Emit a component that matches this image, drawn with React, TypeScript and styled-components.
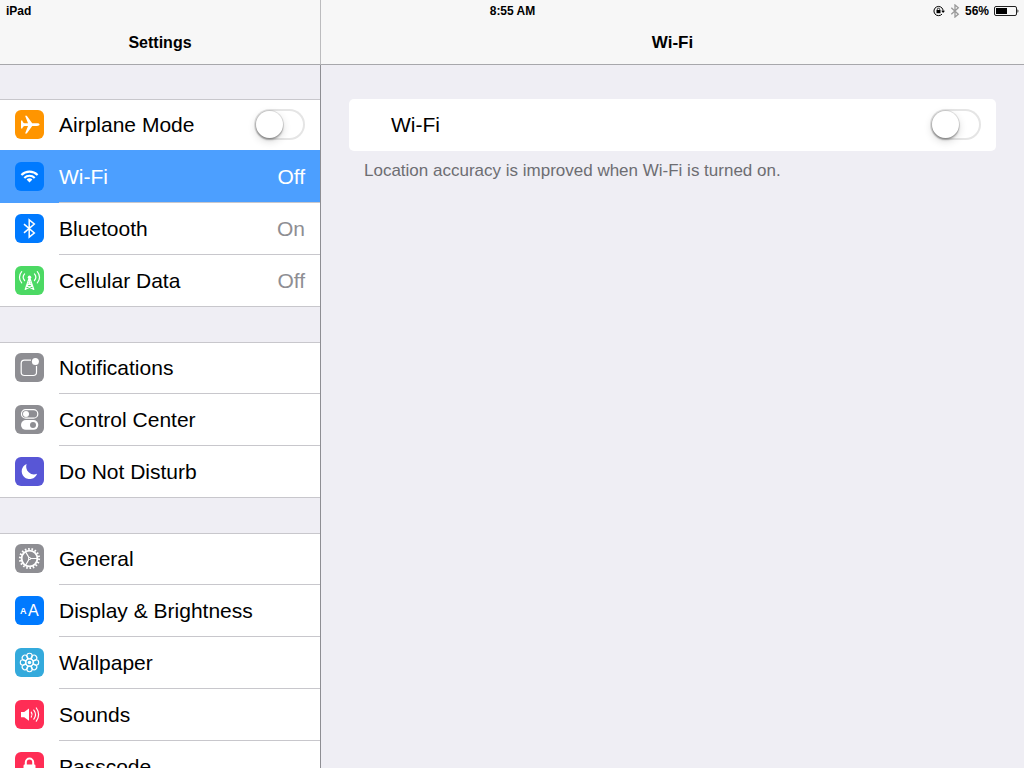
import React, { useState } from "react";
import styled, { createGlobalStyle, css } from "styled-components";

const GlobalStyle = createGlobalStyle`
  *, *::before, *::after { box-sizing: border-box; }
  body {
    margin: 0;
    background: #efeef4;
    color: #000;
    font-family: "Liberation Sans", Arial, sans-serif;
  }
  button, input { font: inherit; color: inherit; }
`;

const hairline = "#c8c7cc";

const Screen = styled.div`
  position: relative;
  display: flex;
  height: 100vh;
  overflow: hidden;
`;

const StatusBar = styled.div`
  position: absolute;
  inset: 0 0 auto 0;
  display: grid;
  grid-template-columns: 1fr auto 1fr;
  align-items: center;
  height: 21px;
  padding: 0 5px 0 6px;
  font-size: 12px;
  line-height: 20px;
  font-weight: 700;
`;

const StatusIcons = styled.div`
  display: flex;
  justify-content: flex-end;
  align-items: center;
  gap: 5px;
`;

const Sidebar = styled.aside`
  display: flex;
  flex-direction: column;
  flex: 0 0 321px;
  min-height: 0;
`;

const Detail = styled.main`
  display: flex;
  flex-direction: column;
  flex: 1;
  min-width: 0;
`;

const TitleBar = styled.header<{ $divided?: boolean }>`
  flex: none;
  height: 65px;
  padding-top: 33px;
  background: #f7f7f7;
  border-bottom: 1px solid #a7a7ab;
  border-right: ${(p) => (p.$divided ? "1px solid #bcbcbe" : "0")};
`;

const Title = styled.h1<{ $size: number }>`
  margin: 0;
  font-size: ${(p) => p.$size}px;
  line-height: 20px;
  font-weight: 700;
  text-align: center;
`;

const Menu = styled.nav`
  flex: 1;
  min-height: 0;
  display: flex;
  flex-direction: column;
  gap: 35px;
  padding-top: 34px;
  border-right: 1px solid #8e8e93;
  overflow-y: auto;
  scrollbar-width: none;
`;

const Group = styled.ul`
  list-style: none;
  margin: 0;
  padding: 0;
  flex: none;
`;

const RowBody = styled.span`
  display: flex;
  align-items: center;
  flex: 1;
  height: 52px;
  padding-right: 15px;
  border-bottom: 1px solid ${hairline};
`;

const rowStyle = css<{ $selected?: boolean }>`
  position: ${(p) => (p.$selected ? "relative" : "static")};
  display: flex;
  gap: 15px;
  width: 100%;
  height: 52px;
  margin: 0;
  padding: 0 0 0 15px;
  border: 0;
  background: ${(p) => (p.$selected ? "#4c9fff" : "#fff")};
  box-shadow: ${(p) => (p.$selected ? "0 -1px 0 #4c9fff" : "none")};
  color: ${(p) => (p.$selected ? "#fff" : "#000")};
  font-size: 21px;
  line-height: 26px;
  text-align: left;
`;

const RowButton = styled.button<{ $selected?: boolean }>`
  ${rowStyle}
  cursor: pointer;
`;

const RowLabel = styled.label<{ $selected?: boolean }>`
  ${rowStyle}
`;

const Item = styled.li`
  &:first-child > * {
    box-shadow: inset 0 1px 0 ${hairline};
  }
  &:last-child > * {
    border-bottom: 1px solid ${hairline};
  }
  &:last-child ${RowBody} {
    height: 51px;
    border-bottom: 0;
  }
`;

const RowTitle = styled.span`
  flex: 1;
`;

const RowValue = styled.span<{ $selected?: boolean }>`
  color: ${(p) => (p.$selected ? "#fff" : "#8e8e93")};
`;

const IconTile = styled.span<{ $color: string }>`
  flex: none;
  width: 29px;
  height: 29px;
  margin-top: 11px;
  border-radius: 6px;
  background: ${(p) => p.$color};
  svg { display: block; }
`;

const Switch = styled.input.attrs({ type: "checkbox", role: "switch" })`
  appearance: none;
  flex: none;
  width: 51px;
  height: 31px;
  margin: 0;
  padding: 0;
  border-radius: 16px;
  background: #fff;
  box-shadow: inset 0 0 0 2px #e5e5e5;
  cursor: pointer;
  &::before {
    content: "";
    display: block;
    width: 27px;
    height: 27px;
    margin: 2px;
    border-radius: 50%;
    background: #fff;
    box-shadow: 0 0 0 1px rgba(0, 0, 0, 0.1), 0 2px 2px rgba(0, 0, 0, 0.26),
      0 3px 8px rgba(0, 0, 0, 0.16);
  }
  &:checked { background: #4cd964; box-shadow: none; }
  &:checked::before { margin-left: 22px; }
`;

const Panel = styled.section`
  padding: 34px 28px;
`;

const Card = styled.label`
  display: flex;
  align-items: center;
  justify-content: space-between;
  height: 52px;
  padding: 0 15px 1px 42px;
  border-radius: 5px;
  background: #fff;
  font-size: 21px;
  line-height: 26px;
`;

const Note = styled.p`
  margin: 9px 15px 0;
  color: #6d6d72;
  font-size: 17px;
  line-height: 22px;
`;

const Svg = ({ children }: { children: React.ReactNode }) => (
  <svg width="29" height="29" viewBox="0 0 29 29" fill="none" stroke="none" aria-hidden="true">
    {children}
  </svg>
);

const Airplane = () => (
  <Svg>
    <path
      fill="#fff"
      d="M24.600 14.600c0 .9-1.200 1.400-2.600 1.400h-4.800l-5.400 7.400h-1.700l2.900-7.400H9.600c-1.200 0-1.700.9-2.400 2.600H6v-8h1.200c.7 1.700 1.200 2.600 2.400 2.600H13l-2.900-7.400h1.700l5.400 7.400H22c1.400 0 2.600.5 2.600 1.400z"
    />
  </Svg>
);

const Wifi = () => (
  <Svg>
    <g stroke="#fff" strokeWidth="2.1">
      <path d="M6.400 12.900a11.600 11.600 0 0 1 16.200 0" />
      <path d="M9.300 15.900a7.400 7.400 0 0 1 10.400 0" />
    </g>
    <path fill="#fff" d="M14.500 20.500l-2.900-2.900a4.200 4.200 0 0 1 5.800 0z" />
  </Svg>
);

const Bluetooth = () => (
  <Svg>
    <path stroke="#fff" strokeWidth="1.5" d="M9 10.100l10.300 8.900-5.100 4.100V5.900l5.100 4.100L9 18.900" />
  </Svg>
);

const Tower = () => (
  <Svg>
    <g stroke="#fff" strokeWidth="1.2" strokeLinecap="round">
      <path d="M6.700 5.600a8.200 8.200 0 0 0 0 11.200M22.300 5.600a8.200 8.200 0 0 1 0 11.200" />
      <path d="M9.600 7.900a5 5 0 0 0 0 6.600M19.400 7.900a5 5 0 0 1 0 6.600" />
      <path d="M14 12.500l-3.800 11M15 12.500l3.800 11M14.500 12.500v4M13 16.600l4.400 3.200-6.400 3.200M16 16.600l-4.400 3.200 6.400 3.200" />
    </g>
    <circle cx="14.500" cy="11.200" r="1.700" fill="#fff" />
  </Svg>
);

const Notification = () => (
  <Svg>
    <path
      stroke="#fff"
      strokeWidth="1.2"
      d="M16 7.200H9.400a3.200 3.200 0 0 0-3.200 3.200v8.900a3.200 3.200 0 0 0 3.200 3.200h8.900a3.200 3.200 0 0 0 3.200-3.200v-6.300"
    />
    <circle cx="20.400" cy="8.600" r="3.500" fill="#fff" />
  </Svg>
);

const Toggles = () => (
  <Svg>
    <rect x="6.500" y="4.600" width="16.300" height="8.600" rx="4.300" stroke="#fff" strokeWidth="1.200" />
    <circle cx="11" cy="8.900" r="3" fill="#fff" />
    <rect x="6" y="15.100" width="17.300" height="9.700" rx="4.850" fill="#fff" />
    <circle cx="18" cy="19.900" r="3" fill="#8e8e93" />
  </Svg>
);

const Moon = () => (
  <Svg>
    <path fill="#fff" d="M11.600 6.900a7.900 7.900 0 1 0 10.500 9.800A7.900 7.900 0 0 1 11.600 6.900z" />
  </Svg>
);

const Gear = () => (
  <Svg>
    <circle cx="14.500" cy="14.500" r="9.500" stroke="#fff" strokeWidth="2.200" strokeDasharray="1.600 1.716" />
    <circle cx="14.500" cy="14.500" r="7.900" stroke="#fff" strokeWidth="1.900" />
    <circle cx="14.500" cy="14.500" r="1.500" fill="#fff" />
    <path stroke="#fff" strokeWidth="1.200" d="M14.500 14.500H22M14.500 14.500L10.700 8M14.500 14.500L10.700 21" />
    <circle cx="14.500" cy="14.500" r=".6" fill="#8e8e93" />
  </Svg>
);

const Letters = () => (
  <Svg>
    <g fill="#fff" fontFamily="Liberation Sans, Arial, sans-serif">
      <text x="5" y="18" fontSize="9" fontWeight="700">A</text>
      <text x="13" y="20" fontSize="16">A</text>
    </g>
  </Svg>
);

const Flower = () => (
  <Svg>
    <g stroke="#fff" strokeWidth="1.1">
      {[0, 45, 90, 135, 180, 225, 270, 315].map((a) => (
        <circle key={a} cx="14.500" cy="8" r="2.700" transform={`rotate(${a} 14.500 14.500)`} />
      ))}
      <circle cx="14.500" cy="14.500" r="3.600" />
    </g>
    <circle cx="14.500" cy="14.500" r="1.800" fill="#fff" />
  </Svg>
);

const Speaker = () => (
  <Svg>
    <path fill="#fff" d="M6 12h3.200l4.800-3.600v12.400L9.200 17.200H6z" />
    <g stroke="#fff" strokeWidth="1.200" strokeLinecap="round">
      <path d="M16.300 12.200a4.300 4.300 0 0 1 0 4.800M18.800 10.100a7.500 7.500 0 0 1 0 9M21.300 8a10.700 10.700 0 0 1 0 13.200" />
    </g>
  </Svg>
);

const Lock = () => (
  <Svg>
    <path stroke="#fff" strokeWidth="2" d="M10.800 13v-2.700a3.700 3.700 0 0 1 7.400 0V13" />
    <rect x="8.500" y="12.500" width="12" height="9.500" rx="1.200" fill="#fff" />
  </Svg>
);

const RotationLock = () => (
  <svg width="12" height="12" viewBox="0 0 12 12" fill="none" aria-hidden="true">
    <path d="M9 9.100a4.600 4.600 0 1 1 1-4.200v1" stroke="#000" />
    <path d="M8.200 5.700H12L10.100 8z" fill="#000" />
    <rect x="3.500" y="5" width="4" height="3.200" fill="#000" />
    <path d="M4.300 5.300v-.9a1.200 1.200 0 0 1 2.400 0v.9" stroke="#000" strokeWidth=".8" />
  </svg>
);

const StatusBluetooth = () => (
  <svg width="10" height="14" viewBox="0 0 10 14" fill="none" aria-hidden="true">
    <path d="M1.300 3.800l7 6.400L5 13V1l3.300 2.800-7 6.400" stroke="#999" strokeWidth="1.300" />
  </svg>
);

const Battery = () => (
  <svg width="25" height="10" viewBox="0 0 25 10" fill="none" aria-hidden="true">
    <rect x=".5" y=".5" width="22" height="9" rx="1.500" stroke="#222" />
    <rect x="2" y="2" width="11" height="6" fill="#000" />
    <path d="M23.500 3.200c1.200.5 1.200 3.100 0 3.600z" fill="#000" />
  </svg>
);

type Entry = { name: string; color: string; icon: React.ReactNode; value?: string; toggle?: boolean };

const groups: Entry[][] = [
  [
    { name: "Airplane Mode", color: "#ff9500", icon: <Airplane />, toggle: true },
    { name: "Wi-Fi", color: "#007aff", icon: <Wifi />, value: "Off" },
    { name: "Bluetooth", color: "#007aff", icon: <Bluetooth />, value: "On" },
    { name: "Cellular Data", color: "#4cd964", icon: <Tower />, value: "Off" },
  ],
  [
    { name: "Notifications", color: "#8e8e93", icon: <Notification /> },
    { name: "Control Center", color: "#8e8e93", icon: <Toggles /> },
    { name: "Do Not Disturb", color: "#5856d6", icon: <Moon /> },
  ],
  [
    { name: "General", color: "#8e8e93", icon: <Gear /> },
    { name: "Display & Brightness", color: "#007aff", icon: <Letters /> },
    { name: "Wallpaper", color: "#34aadc", icon: <Flower /> },
    { name: "Sounds", color: "#ff2d55", icon: <Speaker /> },
    { name: "Passcode", color: "#ff2d55", icon: <Lock /> },
  ],
];

export default function App() {
  const [airplane, setAirplane] = useState(false);
  const [wifi, setWifi] = useState(false);

  return (
    <>
      <GlobalStyle />
      <Screen>
        <Sidebar>
          <TitleBar $divided>
            <Title $size={16}>Settings</Title>
          </TitleBar>
          <Menu>
            {groups.map((entries) => (
              <Group key={entries[0].name}>
                {entries.map((entry) => {
                  const selected = entry.name === "Wi-Fi";
                  const value = selected && wifi ? "On" : entry.value;
                  return (
                    <Item key={entry.name}>
                      {entry.toggle ? (
                        <RowLabel>
                          <IconTile $color={entry.color}>{entry.icon}</IconTile>
                          <RowBody>
                            <RowTitle>{entry.name}</RowTitle>
                            <Switch checked={airplane} onChange={(e) => setAirplane(e.target.checked)} />
                          </RowBody>
                        </RowLabel>
                      ) : (
                        <RowButton type="button" $selected={selected}>
                          <IconTile $color={entry.color}>{entry.icon}</IconTile>
                          <RowBody>
                            <RowTitle>{entry.name}</RowTitle>
                            {value && <RowValue $selected={selected}>{value}</RowValue>}
                          </RowBody>
                        </RowButton>
                      )}
                    </Item>
                  );
                })}
              </Group>
            ))}
          </Menu>
        </Sidebar>
        <Detail>
          <TitleBar>
            <Title $size={17}>Wi-Fi</Title>
          </TitleBar>
          <Panel>
            <Card>
              Wi-Fi
              <Switch checked={wifi} onChange={(e) => setWifi(e.target.checked)} />
            </Card>
            <Note>Location accuracy is improved when Wi-Fi is turned on.</Note>
          </Panel>
        </Detail>
        <StatusBar>
          <span>iPad</span>
          <span>8:55 AM</span>
          <StatusIcons>
            <RotationLock />
            <StatusBluetooth />
            <span>56%</span>
            <Battery />
          </StatusIcons>
        </StatusBar>
      </Screen>
    </>
  );
}
